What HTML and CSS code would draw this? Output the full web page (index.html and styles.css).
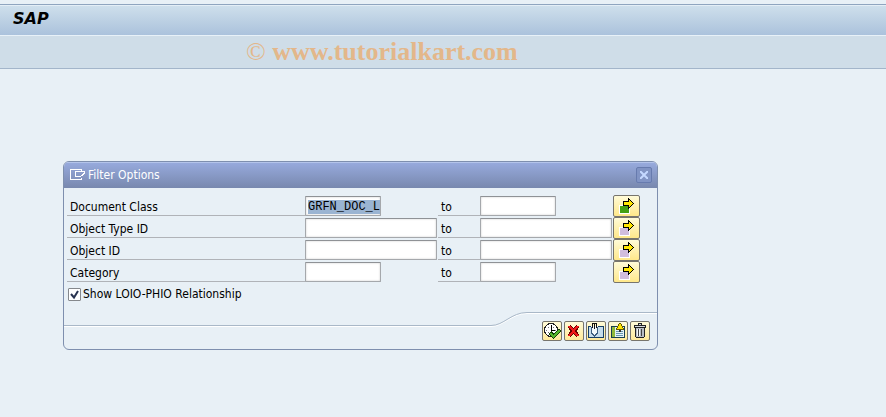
FILE: index.html
```html
<!DOCTYPE html>
<html lang="en">
<head>
	<meta charset="UTF-8">
	<meta name="viewport" content="width=device-width, initial-scale=1.0">
	<title>SAP</title>
	<link rel="stylesheet" href="styles.css">
</head>
<body>
	<!-- shared shapes for the multiple selection buttons -->
	<svg class="defs" width="0" height="0" aria-hidden="true">
		<symbol id="arrow" viewBox="0 0 17 16">
			<path fill="#fff" d="M1 7h11v9H1z"/>
			<path fill="currentColor" d="M2 8h9v7H2z"/>
			<path fill="#ffe600" stroke="#000" d="M5.500 3.500h5v-3l5 5-5 5v-3h-5z"/>
		</symbol>
	</svg>

	<header class="title-bar">
		<h1>SAP</h1>
	</header>
	<div class="toolbar">
		<span class="copy">©</span> www.tutorialkart.com
	</div>

	<form class="dialog">
		<div class="dialog-head">
			<svg width="15" height="13" viewBox="0 0 15 13" fill="none" stroke="#fff" shape-rendering="crispEdges">
				<path d="M11.500 3V1.500H.5v10h11V10M15 3.500H5.500v5H11M14.500 4v1h-1v1h-1v1h-1v1"/>
			</svg>
			<h2>Filter Options</h2>
			<button type="button" class="close" aria-label="Close">
				<svg width="8" height="8" viewBox="0 0 8 8" stroke="#c4d8ff" stroke-width="2"><path d="M0 0l8 8M8 0L0 8"/></svg>
			</button>
		</div>

		<div class="fields">
			<div class="row">
				<label class="name" for="doc-from">Document Class</label>
				<div class="cell"><input class="short" type="text" id="doc-from" value="GRFN_DOC_L"></div>
				<label class="to" for="doc-to">to</label>
				<div class="cell"><input class="short" type="text" id="doc-to"></div>
				<button type="button" class="more active" aria-label="Multiple selection"><svg width="17" height="16"><use href="#arrow"/></svg></button>
			</div>
			<div class="row">
				<label class="name" for="type-from">Object Type ID</label>
				<div class="cell"><input type="text" id="type-from"></div>
				<label class="to" for="type-to">to</label>
				<div class="cell"><input type="text" id="type-to"></div>
				<button type="button" class="more" aria-label="Multiple selection"><svg width="17" height="16"><use href="#arrow"/></svg></button>
			</div>
			<div class="row">
				<label class="name" for="id-from">Object ID</label>
				<div class="cell"><input type="text" id="id-from"></div>
				<label class="to" for="id-to">to</label>
				<div class="cell"><input type="text" id="id-to"></div>
				<button type="button" class="more" aria-label="Multiple selection"><svg width="17" height="16"><use href="#arrow"/></svg></button>
			</div>
			<div class="row">
				<label class="name" for="cat-from">Category</label>
				<div class="cell"><input class="short" type="text" id="cat-from"></div>
				<label class="to" for="cat-to">to</label>
				<div class="cell"><input class="short" type="text" id="cat-to"></div>
				<button type="button" class="more" aria-label="Multiple selection"><svg width="17" height="16"><use href="#arrow"/></svg></button>
			</div>
			<div class="check">
				<input type="checkbox" id="relationship" checked>
				<label for="relationship">Show LOIO-PHIO Relationship</label>
			</div>
		</div>

		<div class="dialog-foot">
			<div class="foot-line"></div>
			<svg class="foot-curve" width="36" height="15" viewBox="0 0 36 15" fill="none">
				<path stroke="#fff" d="M0 14.500C13 14.500 20 1.500 36 1.500"/>
				<path stroke="#a9b8c8" d="M0 13.500C13 13.500 20 .5 36 .5"/>
			</svg>
			<div class="actions">
				<button type="button" aria-label="Execute">
					<svg width="18" height="18" viewBox="0 0 18 18">
						<circle cx="8" cy="8" r="6.500" fill="#fff" stroke="#222"/>
						<path d="M8 3v1M8 12v1M3 8h1M12 8h1M5 5l1 1M11 5l-1 1M5 11l1-1" stroke="#777"/>
						<path d="M8.500 3v5.500H12" stroke="#000" fill="none"/>
						<path d="M7 10.500l3.500 4L17 8" fill="none" stroke="#123f08" stroke-width="4"/>
						<path d="M7.500 11l3 3.500L16.500 8.500" fill="none" stroke="#55b82d" stroke-width="2"/>
					</svg>
				</button>
				<button type="button" aria-label="Cancel">
					<svg width="16" height="16" viewBox="0 0 16 16">
						<path d="M3 3l9 10M12 3L3 13" stroke="#600" stroke-width="4"/>
						<path d="M3 3l9 10M12 3L3 13" stroke="#f01818" stroke-width="2"/>
					</svg>
				</button>
				<button type="button" aria-label="Clipboard">
					<svg width="16" height="16" viewBox="0 0 16 16">
						<path d="M.5 3.500h15v11H.5z" fill="#c5dcec" stroke="#173f66"/>
						<path d="M3 3h7v7l-3 3h-1l-3-3z" fill="#f2f9fc"/>
						<path d="M3.500 4v6l3 3 3-3V4" fill="none" stroke="#3c5e80"/>
						<path d="M4.500 5V.5h4V5M6.500 1v5" fill="none" stroke="#111"/>
					</svg>
				</button>
				<button type="button" aria-label="Insert from clipboard">
					<svg width="16" height="16" viewBox="0 0 16 16">
						<path d="M1.500 3.500h13v11h-13z" fill="#e4f2f7" stroke="#173f50"/>
						<path d="M2 4h3v10H2z" fill="#8fb93a"/>
						<path d="M6 8.500h7M6 10.500h7M6 12.500h7" stroke="#6695ae"/>
						<path d="M9 0h2v1h1v2h1v2h1v2H6V5h1V3h1V1h1z" fill="#655900"/>
						<path d="M9 1h2v2h1v2h1v1H7V5h1V3h1z" fill="#ffe500"/>
						<path d="M9 7h2v2H9z" fill="#333"/>
					</svg>
				</button>
				<button type="button" aria-label="Delete">
					<svg width="16" height="16" viewBox="0 0 16 16">
						<path d="M3.500 4.500h9v9l-1 1h-7l-1-1z" fill="#b8bdc5" stroke="#222"/>
						<path d="M2.500 2.500h11v2h-11zM6.500 2V.5h3V2" fill="#d5d9df" stroke="#222"/>
						<path d="M6.500 6v7M9.500 6v7" stroke="#444"/>
						<path d="M7.500 6v7M5.500 6v7" stroke="#f4f6f8"/>
					</svg>
				</button>
			</div>
		</div>
	</form>

	<script>
		const first = document.getElementById('doc-from');
		first.focus();
		first.select();
	</script>
</body>
</html>
```
FILE: styles.css
```css
* {
	box-sizing: border-box;
}

body {
	margin: 0;
	padding-top: 4px;
	background: #e8f0f6;
	color: #000;
	font-family: "DejaVu Sans Condensed", "DejaVu Sans", sans-serif;
	font-size: 12px;
	line-height: 16px;
}

h1, h2 {
	margin: 0;
	font-weight: normal;
}

button {
	display: flex;
	align-items: center;
	justify-content: center;
	padding: 0;
}

.defs {
	position: absolute;
}

.title-bar {
	height: 32px;
	padding: 4px 13px;
	border-top: 1px solid #8fa5bf;
	border-bottom: 1px solid #e8f1f8;
	background: linear-gradient(#cfe0ec, #abc2dc);
	box-shadow: inset 0 1px #e4eef6;
}

.title-bar h1 {
	font: italic bold 16px/20px "DejaVu Sans", sans-serif;
}

.toolbar {
	height: 33px;
	padding-left: 246px;
	border-bottom: 1px solid #a3b5ca;
	background: #cfdde8;
	color: #e3b78a;
	font: bold 26px/32px "Liberation Serif", serif;
}

.copy {
	font-weight: normal;
}

/* dialog */
.dialog {
	max-width: 595px;
	margin: 92px 63px 0;
	overflow: hidden;
	border: 1px solid #7e8fae;
	border-radius: 6px;
}

.dialog-head {
	display: flex;
	align-items: center;
	gap: 3px;
	height: 26px;
	padding: 0 5px 1px 6px;
	background: linear-gradient(#98abde, #7888ae);
	box-shadow: inset 0 1px #b4c4ea;
	color: #fff;
}

.dialog-head h2 {
	flex: 1;
	font-size: 12px;
}

.close {
	width: 16px;
	height: 16px;
	border: 1px solid #677bae;
	border-radius: 2px;
	background: #8194c4;
}

.fields {
	padding: 6px 17px 0 3px;
}

.row {
	display: grid;
	grid-template-columns: minmax(90px, 1fr) 133px 42px 133px 27px;
	height: 22px;
}

.name, .to {
	height: 22px;
	padding: 5px 3px 0;
	border-bottom: 1px solid #b0b3b8;
}

.row input {
	display: block;
	width: 132px;
	height: 20px;
	margin-top: 2px;
	padding: 1px 0 0 2px;
	border: 1px solid #a5a8ac;
	border-top-color: #8f9296;
	border-radius: 1px;
	outline: none;
	background: #fff;
	box-shadow: inset 0 0 2px #c4c4c4;
	font: 12px/16px "Liberation Mono", monospace;
}

.row .short {
	width: 76px;
}

.row input::selection {
	background: #9ab4d2;
	color: #000;
}

.more {
	height: 22px;
	margin-top: 1px;
	border: 1px solid #77756d;
	border-radius: 2px;
	background: linear-gradient(#fffbd8, #ffe88a);
	color: #d1bddd;
}

.more.active {
	color: #43a014;
}

.more svg, .actions svg {
	shape-rendering: crispEdges;
}

.check {
	display: flex;
	align-items: center;
	gap: 2px;
	height: 22px;
	margin-top: 1px;
	padding: 1px;
}

.check input {
	width: 13px;
	height: 13px;
	margin: 0;
	appearance: none;
	border: 1px solid #85888c;
	border-radius: 1px;
	background: #fff;
}

.check input:checked {
	background: #fff url("data:image/svg+xml,%3Csvg xmlns='http://www.w3.org/2000/svg' viewBox='0 0 11 11'%3E%3Cpath d='M2 5l3 3.500L9 2' fill='none' stroke='%23283350' stroke-width='2'/%3E%3C/svg%3E");
}

/* footer with the raised tab for the buttons */
.dialog-foot {
	display: flex;
	height: 37px;
	margin-top: 7px;
}

.foot-line {
	flex: 1;
	height: 15px;
	border-bottom: 1px solid #fff;
	box-shadow: inset 0 -1px #a9b8c8;
}

.actions {
	display: flex;
	gap: 2px;
	padding: 8px 7px 0 15px;
	border-top: 1px solid #a9b8c8;
	box-shadow: inset 0 1px #fff;
}

.actions button {
	width: 20px;
	height: 20px;
	border: 1px solid #77756d;
	border-radius: 2px;
	background: linear-gradient(#fffbd8, #ffe99a);
}
```
